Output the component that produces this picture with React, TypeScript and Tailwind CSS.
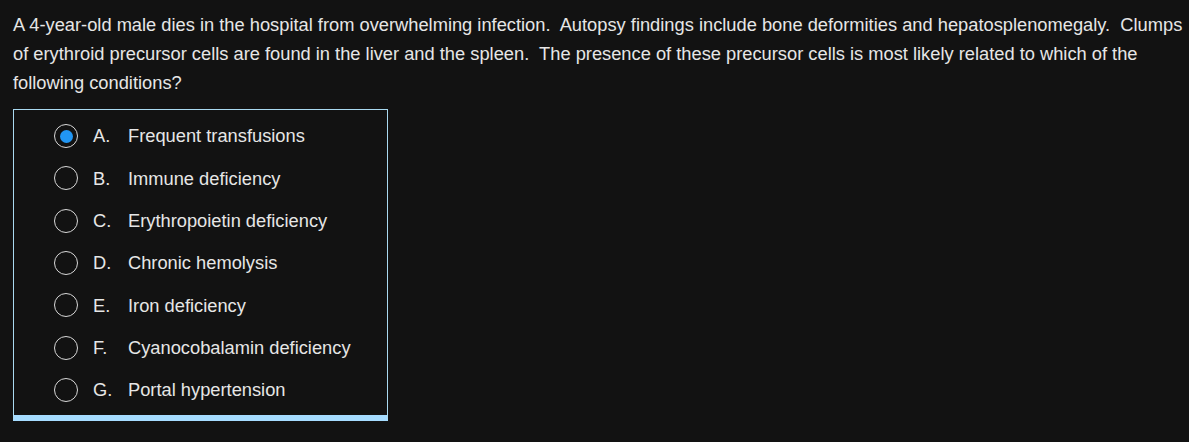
import React, { useState } from "react";

const options = [
  { letter: "A", text: "Frequent transfusions" },
  { letter: "B", text: "Immune deficiency" },
  { letter: "C", text: "Erythropoietin deficiency" },
  { letter: "D", text: "Chronic hemolysis" },
  { letter: "E", text: "Iron deficiency" },
  { letter: "F", text: "Cyanocobalamin deficiency" },
  { letter: "G", text: "Portal hypertension" },
];

export default function App() {
  const [selected, setSelected] = useState("A");

  return (
    <div
      className="min-h-[442px] w-full bg-[#121212] text-[#e6e6e6] pl-[13px] pr-[2px] pt-[10px]"
      style={{ fontFamily: '"Liberation Sans", Arial, sans-serif' }}
    >
      <p className="text-[18.3px] leading-[29px]">
        A 4-year-old male dies in the hospital from overwhelming infection.&nbsp; Autopsy findings include bone
        deformities and hepatosplenomegaly.&nbsp; Clumps of erythroid precursor cells are found in the liver and the
        spleen.&nbsp; The presence of these precursor cells is most likely related to which of the following
        conditions?
      </p>

      <div className="mt-[12px] w-[375px] border border-[#a9d9f0] border-b-[6px] border-b-[#a6dcff] pt-[5px] pb-[4px]">
        {options.map((o) => (
          <label
            key={o.letter}
            className="flex items-center h-[42.33px] cursor-pointer"
            onClick={() => setSelected(o.letter)}
          >
            <span className="ml-[40px] flex items-center justify-center w-[24px] h-[24px] rounded-full border-[1.5px] border-[#d8d8d8]">
              {selected === o.letter && <span className="w-[13px] h-[13px] rounded-full bg-[#2196f3]" />}
            </span>
            <span className="ml-[15px] w-[35px] text-[18.3px]">{o.letter}.</span>
            <span className="text-[18.3px]">{o.text}</span>
          </label>
        ))}
      </div>
    </div>
  );
}
